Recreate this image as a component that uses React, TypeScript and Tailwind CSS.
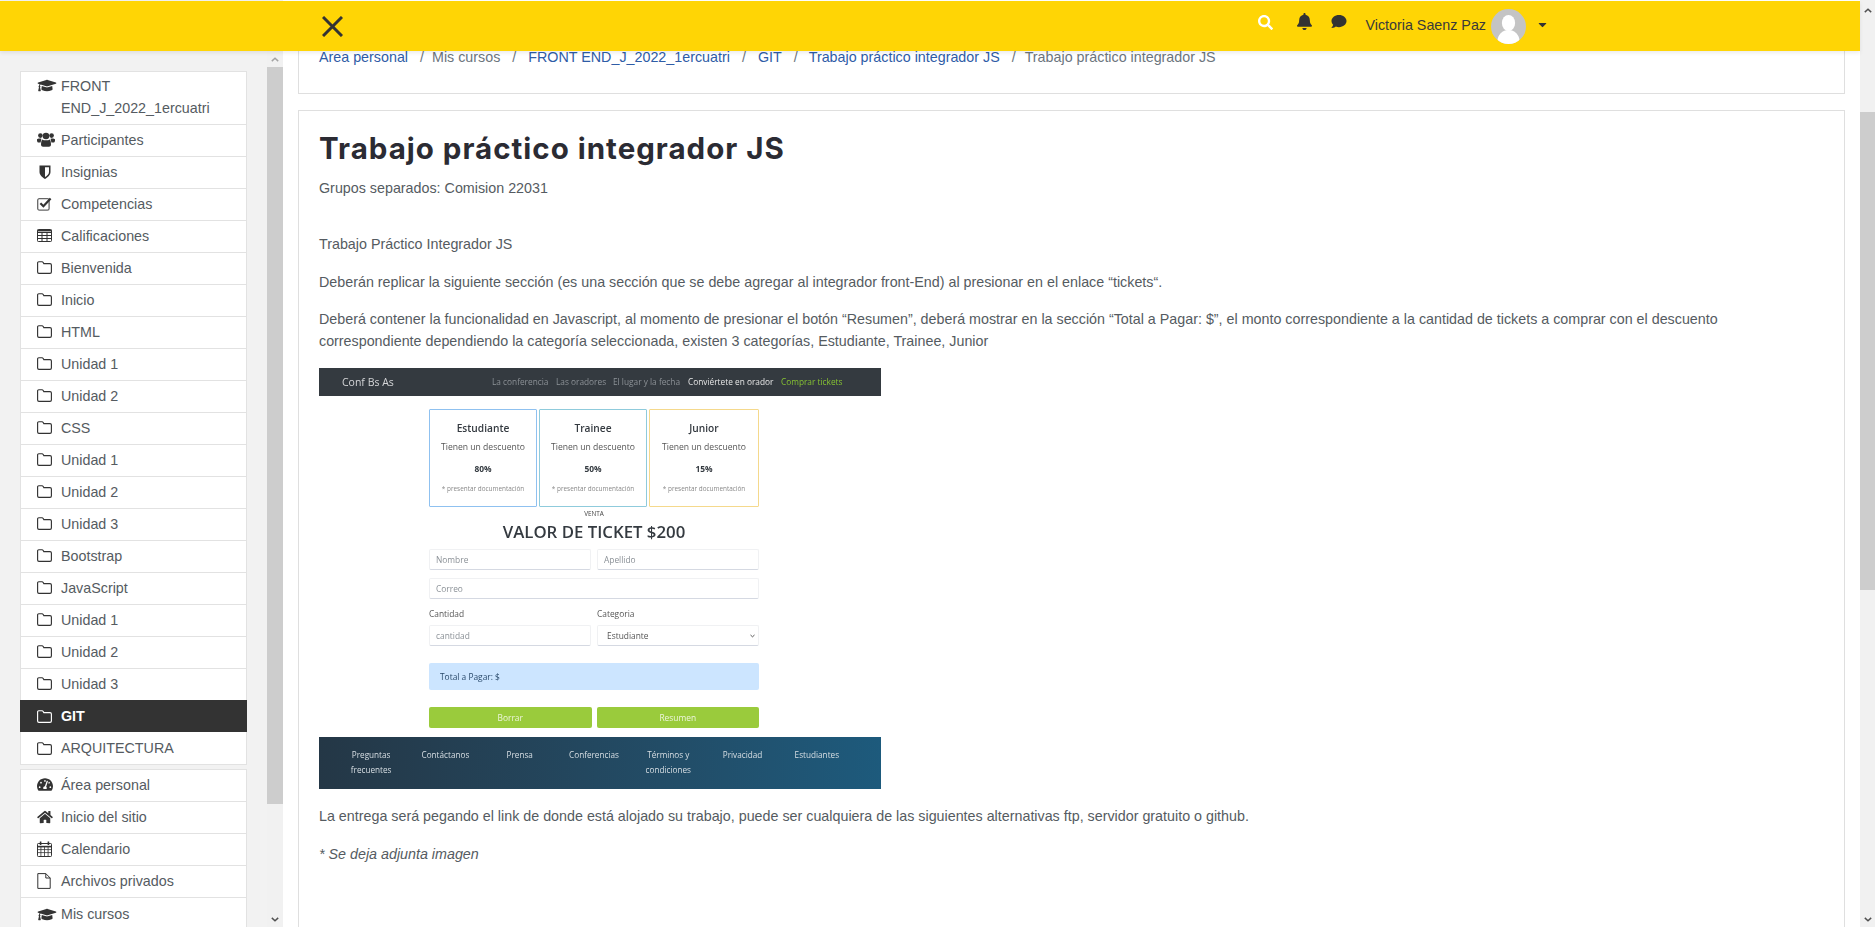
import React from "react";
import { FaGraduationCap, FaTachometerAlt, FaHome, FaSearch, FaBell, FaComment, FaCaretDown } from "react-icons/fa";

type IconProps = { className?: string };

function UsersIcon() {
  return (
    <svg viewBox="0 0 18 15" className="w-[18px] h-[15px]" fill="currentColor">
      <circle cx="3.4" cy="3.6" r="2.3" />
      <circle cx="14.6" cy="3.6" r="2.3" />
      <circle cx="9" cy="4" r="3.3" />
      <path d="M0 7.2 C0.8 6.4 3 6.2 4.4 6.8 C4.2 8.2 3.8 9.4 3.6 10.4 L0.9 10.4 C0 10 -0.2 8 0 7.2Z" />
      <path d="M18 7.2 C17.2 6.4 15 6.2 13.6 6.8 C13.8 8.2 14.2 9.4 14.4 10.4 L17.1 10.4 C18 10 18.2 8 18 7.2Z" />
      <path d="M5.4 7.4 C7 8.6 11 8.6 12.6 7.4 C13.6 8 14 10.6 14 12.6 C14 14 13 14.8 12 14.8 L6 14.8 C5 14.8 4 14 4 12.6 C4 10.6 4.4 8 5.4 7.4Z" />
    </svg>
  );
}

function ShieldIcon() {
  return (
    <svg viewBox="0 0 12 14" className="w-[12px] h-[14px] ml-[2px]">
      <path d="M0.5 0.6 H11.5 V7 C11.5 10.4 8.2 12.5 6 14 C3.8 12.5 0.5 10.4 0.5 7Z" fill="currentColor" />
      <path d="M6 2.2 H10 V7 C10 9.4 7.6 11 6 12.1Z" fill="white" />
    </svg>
  );
}

function CheckIcon() {
  return (
    <svg viewBox="0 0 15 14" className="w-[15px] h-[14px]" fill="none">
      <rect x="0.7" y="1.7" width="11.4" height="11.4" rx="1.6" stroke="#666" strokeWidth="1.3" />
      <path d="M3.4 6.2 L6.4 9.2 L13.6 1.6" stroke="currentColor" strokeWidth="2.2" />
    </svg>
  );
}

function TableIcon() {
  return (
    <svg viewBox="0 0 15 13" className="w-[15px] h-[13px]" fill="none" stroke="currentColor" strokeWidth="1">
      <rect x="0.5" y="0.5" width="14" height="12" rx="0.8" />
      <path d="M0.5 3.5 H14.5 M0.5 6.5 H14.5 M0.5 9.5 H14.5 M5 3.5 V12.5 M10 3.5 V12.5" />
      <path d="M0.5 1.6 H14.5" strokeWidth="1.6" />
    </svg>
  );
}

function FolderIcon() {
  return (
    <svg viewBox="0 0 15 13" className="w-[15px] h-[13px]" fill="none" stroke="currentColor" strokeWidth="1.15">
      <path d="M1.8 0.7 H5 C5.6 0.7 5.9 1 6.2 1.5 L6.8 2.6 H13 C13.8 2.6 14.4 3.2 14.4 4 V10.9 C14.4 11.7 13.8 12.3 13 12.3 H2 C1.2 12.3 0.6 11.7 0.6 10.9 V1.9 C0.6 1.2 1.1 0.7 1.8 0.7Z" />
    </svg>
  );
}

function CalendarIcon() {
  return (
    <svg viewBox="0 0 15 16" className="w-[15px] h-[16px]" fill="none" stroke="currentColor" strokeWidth="1">
      <rect x="0.5" y="2.5" width="14" height="13" rx="0.8" />
      <path d="M0.5 5.6 H14.5" strokeWidth="1.6" />
      <path d="M0.5 8.6 H14.5 M0.5 11.6 H14.5 M3.9 5.6 V15.5 M7.5 5.6 V15.5 M11.1 5.6 V15.5" strokeWidth="0.8" />
      <path d="M3.6 0.6 V4 M11.4 0.6 V4" strokeWidth="1.6" />
    </svg>
  );
}

function FileIcon() {
  return (
    <svg viewBox="0 0 14 16" className="w-[14px] h-[16px]" fill="none" stroke="currentColor" strokeWidth="1">
      <path d="M0.8 0.6 H8.8 L13.2 5 V15.4 H0.8Z M8.8 0.6 V5 H13.2" />
    </svg>
  );
}

function Cap() {
  return <FaGraduationCap className="w-[20px] h-[15px]" />;
}
function Dash() {
  return <FaTachometerAlt className="w-[16px] h-[15px]" />;
}
function Home() {
  return <FaHome className="w-[16px] h-[14px]" />;
}

type Item = { icon: React.ComponentType<IconProps>; label: string; active?: boolean };

const courseItems: Item[] = [
  { icon: UsersIcon, label: "Participantes" },
  { icon: ShieldIcon, label: "Insignias" },
  { icon: CheckIcon, label: "Competencias" },
  { icon: TableIcon, label: "Calificaciones" },
  { icon: FolderIcon, label: "Bienvenida" },
  { icon: FolderIcon, label: "Inicio" },
  { icon: FolderIcon, label: "HTML" },
  { icon: FolderIcon, label: "Unidad 1" },
  { icon: FolderIcon, label: "Unidad 2" },
  { icon: FolderIcon, label: "CSS" },
  { icon: FolderIcon, label: "Unidad 1" },
  { icon: FolderIcon, label: "Unidad 2" },
  { icon: FolderIcon, label: "Unidad 3" },
  { icon: FolderIcon, label: "Bootstrap" },
  { icon: FolderIcon, label: "JavaScript" },
  { icon: FolderIcon, label: "Unidad 1" },
  { icon: FolderIcon, label: "Unidad 2" },
  { icon: FolderIcon, label: "Unidad 3" },
  { icon: FolderIcon, label: "GIT", active: true },
  { icon: FolderIcon, label: "ARQUITECTURA" },
];

const siteItems: Item[] = [
  { icon: Dash, label: "Área personal" },
  { icon: Home, label: "Inicio del sitio" },
  { icon: CalendarIcon, label: "Calendario" },
  { icon: FileIcon, label: "Archivos privados" },
  { icon: Cap, label: "Mis cursos" },
];

function Row({ item }: { item: Item }) {
  const Icon = item.icon;
  return (
    <div
      className={
        item.active
          ? "h-[32px] -mx-px -mt-px flex items-center pl-[17px] bg-[#333333] text-white font-bold"
          : "h-[32px] flex items-center pl-[16px] pb-[2px] border-b border-[#e2e2e2] last:border-b-0 last:pb-0 text-[#555b61]"
      }
    >
      <span className={item.active ? "w-[24px] flex text-white" : "w-[24px] flex text-[#333333]"}>
        <Icon />
      </span>
      <span>{item.label}</span>
    </div>
  );
}

function Chevron({ up, className, color }: { up?: boolean; className: string; color: string }) {
  return (
    <svg viewBox="0 0 10 6" className={className} fill="none" stroke={color} strokeWidth="1.8">
      <path d={up ? "M1 5 L5 1.4 L9 5" : "M1 1 L5 4.6 L9 1"} />
    </svg>
  );
}

function Scrollbar({ spacerTop, thumb, className, topColor }: { spacerTop: string; thumb: string; className: string; topColor: string }) {
  return (
    <div className={className}>
      <div className={spacerTop + " flex items-center justify-center shrink-0"}>
        <Chevron up color={topColor} className="w-[8px] h-[5px]" />
      </div>
      <div className={thumb + " bg-[#cdcdcd] shrink-0"} />
      <div className="flex-1 flex items-end justify-center pb-[5px]">
        <Chevron color="#505050" className="w-[8px] h-[5px]" />
      </div>
    </div>
  );
}

function PriceCard({ title, pct, border, w }: { title: string; pct: string; border: string; w: string }) {
  return (
    <div className={w + " h-[98px] border rounded-[1px] flex flex-col items-center " + border}>
      <div className="mt-[11px] text-[10.2px] leading-[14px] text-[#343a40] font-semibold">{title}</div>
      <div className="mt-[5px] text-[8.6px] leading-[14px] text-[#555]">Tienen un descuento</div>
      <div className="mt-[8px] text-[8.4px] leading-[14px] font-bold text-[#343a40]">{pct}</div>
      <div className="mt-[6px] text-[6.4px] leading-[14px] text-[#888]">* presentar documentación</div>
    </div>
  );
}

function Field({ text, select }: { text: string; select?: boolean }) {
  return (
    <div className="h-[21px] flex-1 border border-[#f0f1f3] border-b-[#d5d9e2] rounded-[2px] bg-white flex items-center justify-between pl-[6px] pr-[3px] text-[8.4px] text-[#8a9096]">
      <span className={select ? "pl-[3px] text-[#555]" : ""}>{text}</span>
      {select && <Chevron color="#444" className="w-[5px] h-[4px]" />}
    </div>
  );
}

function TicketPicture() {
  const nav = [
    { t: "La conferencia", c: "text-[#8c9196]", w: "w-[64px]" },
    { t: "Las oradores", c: "text-[#8c9196]", w: "w-[57px]" },
    { t: "El lugar y la fecha", c: "text-[#8c9196]", w: "w-[75px]" },
    { t: "Conviértete en orador", c: "text-[#e6e6e6]", w: "w-[93px]" },
    { t: "Comprar tickets", c: "text-[#86c232]", w: "w-[60px]" },
  ];
  const foot = ["Preguntas frecuentes", "Contáctanos", "Prensa", "Conferencias", "Términos y condiciones", "Privacidad", "Estudiantes"];
  return (
    <div className="w-[562px] h-[421px] mt-[16px] flex flex-col blur-[0.5px] font-['Open_Sans',sans-serif]">
      <div className="h-[28px] bg-[#343a40] flex items-center pl-[23px] shrink-0">
        <span className="w-[150px] text-[10.5px] text-[#d5d6d8]">Conf Bs As</span>
        <div className="flex whitespace-nowrap text-[8.3px]">
          {nav.map((n) => (
            <span key={n.t} className={n.w + " " + n.c}>{n.t}</span>
          ))}
        </div>
      </div>
      <div className="w-[330px] ml-[110px] flex flex-col flex-1">
        <div className="flex gap-[2px] mt-[13px]">
          <PriceCard title="Estudiante" pct="80%" border="border-[#8fc1f0]" w="w-[108px]" />
          <PriceCard title="Trainee" pct="50%" border="border-[#8fcbdc]" w="w-[108px]" />
          <PriceCard title="Junior" pct="15%" border="border-[#f5d98c]" w="w-[110px]" />
        </div>
        <div className="text-center text-[6.4px] leading-[10px] mt-[2px] text-[#444]">VENTA</div>
        <div className="text-center text-[16.8px] leading-[23px] mt-[1px] font-semibold text-[#343a40] whitespace-nowrap">VALOR DE TICKET $200</div>
        <div className="flex gap-[6px] mt-[6px]">
          <Field text="Nombre" />
          <Field text="Apellido" />
        </div>
        <div className="flex mt-[8px]">
          <Field text="Correo" />
        </div>
        <div className="flex gap-[6px] mt-[9px] text-[8.4px] leading-[12px] text-[#555]">
          <span className="flex-1">Cantidad</span>
          <span className="flex-1">Categoria</span>
        </div>
        <div className="flex gap-[6px] mt-[5px]">
          <Field text="cantidad" />
          <Field text="Estudiante" select />
        </div>
        <div className="h-[27px] mt-[17px] bg-[#cce5ff] rounded-[2px] flex items-center pl-[11px] text-[8.4px] text-[#2a4a6b]">Total a Pagar: $</div>
        <div className="flex gap-[5px] mt-[17px]">
          <div className="h-[21px] flex-1 rounded-[2px] bg-[#9acb3c] flex items-center justify-center text-[8.4px] text-[#eef6dd]">Borrar</div>
          <div className="h-[21px] flex-1 rounded-[2px] bg-[#9acb3c] flex items-center justify-center text-[8.4px] text-[#eef6dd]">Resumen</div>
        </div>
      </div>
      <div className="h-[52px] shrink-0 bg-gradient-to-r from-[#243746] to-[#1d5a7c] flex pl-[15px] pr-[27px] pt-[11px]">
        {foot.map((f) => (
          <div key={f} className="flex-1 text-center text-[8.2px] leading-[14.5px] text-[#d8dfe4] px-[12px]">{f}</div>
        ))}
      </div>
    </div>
  );
}

export default function App() {
  return (
    <div className="relative flex w-[1875px] h-[927px] overflow-hidden bg-white font-['Liberation_Sans',sans-serif] text-[14.3px] leading-[22px] text-[#555b61]">
      <div className="relative flex flex-1 min-w-0">
        <aside className="flex w-[283px] shrink-0 pt-[51px] bg-[#f2f2f2]">
          <div className="w-[267px] pl-[20px] pr-[20px] pt-[20px] shrink-0">
            <div className="bg-white border border-[#e2e2e2]">
              <div className="flex items-start pl-[16px] pt-[3px] pb-[5px] border-b border-[#e2e2e2] text-[#555b61]">
                <span className="w-[24px] pt-[3px] text-[#333333]">
                  <Cap />
                </span>
                <span className="w-[150px]">FRONT END_J_2022_1ercuatri</span>
              </div>
              {courseItems.map((it, i) => (
                <Row key={i} item={it} />
              ))}
            </div>
            <div className="bg-white border border-[#e2e2e2] mt-[4px]">
              {siteItems.map((it) => (
                <Row key={it.label} item={it} />
              ))}
            </div>
          </div>
          <Scrollbar topColor="#a3a3a3" className="w-[16px] shrink-0 flex flex-col bg-[#f1f1f1]" spacerTop="h-[16px]" thumb="h-[737px]" />
        </aside>

        <main className="flex-1 min-w-0 pl-[15px] pr-[15px] pt-[20px] bg-white">
          <div className="h-[74px] border border-[#dfdfdf] bg-white pl-[20px] pt-[25px] flex whitespace-nowrap">
            <span className="text-[#2f5ca6]">Área personal</span>
            <span className="ml-[12px] mr-[8px] text-[#6c757d]">/</span>
            <span className="text-[#6c757d]">Mis cursos</span>
            <span className="ml-[12px] mr-[12px] text-[#6c757d]">/</span>
            <span className="text-[#2f5ca6]">FRONT END_J_2022_1ercuatri</span>
            <span className="ml-[12px] mr-[12px] text-[#6c757d]">/</span>
            <span className="text-[#2f5ca6]">GIT</span>
            <span className="ml-[12px] mr-[11px] text-[#6c757d]">/</span>
            <span className="text-[#2f5ca6]">Trabajo práctico integrador JS</span>
            <span className="ml-[12px] mr-[9px] text-[#6c757d]">/</span>
            <span className="text-[#6c757d]">Trabajo práctico integrador JS</span>
          </div>

          <div className="mt-[16px] h-[900px] border border-[#dfdfdf] bg-white pl-[20px] pr-[20px] pt-[19px]">
            <h1 className="text-[29.5px] leading-[36px] tracking-[1px] font-bold text-[#2b2b33] font-['Inter',sans-serif]">Trabajo práctico integrador JS</h1>
            <p className="mt-[11px]">Grupos separados: Comision 22031</p>
            <p className="mt-[34px]">Trabajo Práctico Integrador JS</p>
            <p className="mt-[16px]">Deberán replicar la siguiente sección (es una sección que se debe agregar al integrador front-End) al presionar en el enlace “tickets“.</p>
            <p className="mt-[15px]">Deberá contener la funcionalidad en Javascript, al momento de presionar el botón “Resumen”, deberá mostrar en la sección “Total a Pagar: $”, el monto correspondiente a la cantidad de tickets a comprar con el descuento correspondiente dependiendo la categoría seleccionada, existen 3 categorías, Estudiante, Trainee, Junior</p>
            <TicketPicture />
            <p className="mt-[16px]">La entrega será pegando el link de donde está alojado su trabajo, puede ser cualquiera de las siguientes alternativas ftp, servidor gratuito o github.</p>
            <p className="mt-[16px] italic">* Se deja adjunta imagen</p>
          </div>
        </main>

        <header className="absolute left-0 right-0 top-[1px] h-[50px] bg-[#ffd505] shadow-[0_2px_4px_rgba(0,0,0,0.08)] flex items-center text-[#333333]">
          <svg viewBox="0 0 21 21" className="ml-[322px] w-[21px] h-[21px]" fill="none" stroke="#333333" strokeWidth="3">
            <path d="M1 1 L20 20 M20 1 L1 20" />
          </svg>
          <div className="ml-auto flex items-center">
            <FaSearch className="w-[15px] h-[15px] text-white mr-[24px] -mt-[8px]" />
            <FaBell className="w-[15px] h-[17px] mr-[19px] -mt-[10px]" />
            <FaComment className="w-[16px] h-[15px] mr-[18px] -mt-[10px]" />
            <span className="text-[#3a3a3a] whitespace-nowrap -mt-[2px]">Victoria Saenz Paz</span>
            <svg viewBox="0 0 35 35" className="ml-[5px] w-[35px] h-[35px] rounded-full bg-[#c4c4c4]">
              <ellipse cx="17.5" cy="14" rx="6.6" ry="8" fill="white" />
              <ellipse cx="17.5" cy="32" rx="11" ry="11" fill="white" />
            </svg>
            <FaCaretDown className="w-[13px] h-[13px] ml-[10px] mr-[311px] -mt-[4px]" />
          </div>
        </header>
      </div>

      <Scrollbar topColor="#505050" className="w-[15px] shrink-0 flex flex-col bg-[#f1f1f1]" spacerTop="h-[20px]" thumb="h-[478px] mt-[92px]" />
    </div>
  );
}
